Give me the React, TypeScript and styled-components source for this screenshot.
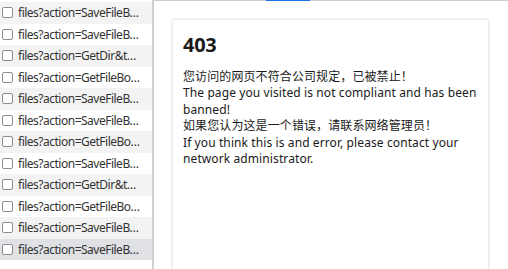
import React from "react";
import styled, { createGlobalStyle } from "styled-components";

const Global = createGlobalStyle`
  html, body { margin: 0; padding: 0; background: #ffffff; overflow: hidden; }
  #root { width: 508px; height: 269px; }
  * { box-sizing: border-box; }
`;

const Layout = styled.div`
  display: flex;
  width: 508px;
  height: 269px;
  overflow: hidden;
  font-family: "Noto Sans", "Noto Sans CJK SC", sans-serif;
`;

const RequestList = styled.div`
  width: 154px;
  flex: none;
  padding-top: 2px;
  border-right: 2px solid #cfd1d5;
  background: #ffffff;
`;

type Shade = "odd" | "even" | "selected";

const rowColors: Record<Shade, string> = {
  odd: "#f3f3f3",
  even: "#ffffff",
  selected: "#dfe1e5",
};

const Row = styled.div<{ $shade: Shade }>`
  height: 21.5px;
  display: flex;
  align-items: center;
  gap: 5px;
  padding-left: 2px;
  background: ${(p) => rowColors[p.$shade]};
`;

const Check = styled.span`
  width: 11px;
  height: 11px;
  flex: none;
  border: 1px solid #8d8d8d;
  border-radius: 2px;
  background: #ffffff;
`;

const Name = styled.span`
  font-size: 12px;
  letter-spacing: -0.5px;
  color: #333333;
  white-space: nowrap;
  overflow: hidden;
`;

const Preview = styled.div`
  flex: 1;
  display: flex;
  flex-direction: column;
  min-width: 0;
`;

const TabRule = styled.div`
  display: flex;
  height: 1px;
  flex: none;
  background: #cbcdd1;
`;

const TabGap = styled.div`
  width: 112px;
`;

const ActiveTab = styled.div`
  width: 44px;
  background: #1a73e8;
`;

const Canvas = styled.div`
  flex: 1;
  display: flex;
  flex-direction: column;
  padding: 19px 0 0 19px;
`;

const Card = styled.div`
  width: 315px;
  flex: 1;
  background: #ffffff;
  box-shadow: 0 0 3px rgba(0, 0, 0, 0.22);
  padding: 11px 3px 0 10px;
  color: #1a1a1a;
`;

const Title = styled.h1`
  margin: 0 0 11px 0;
  font-size: 20px;
  line-height: 27px;
  font-weight: 700;
  letter-spacing: -0.3px;
`;

const Message = styled.p`
  margin: 0;
  font-size: 12px;
  line-height: 16.4px;
  letter-spacing: 0.1px;
`;

const rows = [
  "files?action=SaveFileB…",
  "files?action=SaveFileB…",
  "files?action=GetDir&t…",
  "files?action=GetFileBo…",
  "files?action=SaveFileB…",
  "files?action=SaveFileB…",
  "files?action=GetFileBo…",
  "files?action=SaveFileB…",
  "files?action=GetDir&t…",
  "files?action=GetFileBo…",
  "files?action=SaveFileB…",
  "files?action=SaveFileB…",
];

export default function App() {
  return (
    <>
      <Global />
      <Layout>
        <RequestList>
          {rows.map((r, i) => (
            <Row
              key={i}
              $shade={i === rows.length - 1 ? "selected" : i % 2 === 0 ? "odd" : "even"}
            >
              <Check />
              <Name>{r}</Name>
            </Row>
          ))}
        </RequestList>
        <Preview>
          <TabRule>
            <TabGap />
            <ActiveTab />
          </TabRule>
          <Canvas>
            <Card>
              <Title>403</Title>
              <Message>
                您访问的网页不符合公司规定，已被禁止！
                <br />
                The page you visited is not compliant and has been banned!
                <br />
                如果您认为这是一个错误，请联系网络管理员！
                <br />
                If you think this is and error, please contact your network administrator.
              </Message>
            </Card>
          </Canvas>
        </Preview>
      </Layout>
    </>
  );
}
